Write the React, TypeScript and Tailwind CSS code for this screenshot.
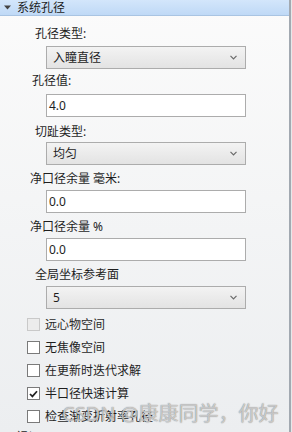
import React from 'react';

const font = "font-['Noto_Sans','Noto_Sans_CJK_SC',sans-serif]";

function Chevron() {
    return (
        <svg width="7" height="5" viewBox="0 0 7 5" className="shrink-0">
            <path d="M0.5 0.8 L3.5 3.8 L6.5 0.8" fill="none" stroke="#6a6a6a" strokeWidth="1.2" />
        </svg>
    );
}

function Select({ value, className = '' }: { value: string; className?: string }) {
    return (
        <div
            className={`ml-[46px] flex h-[23px] w-[200px] items-center justify-between border border-[#acacac] bg-gradient-to-b from-[#f3f3f3] to-[#e3e3e3] pl-[6px] pr-[8px] text-[12px] text-[#1e1e1e] ${className}`}
        >
            <span>{value}</span>
            <Chevron />
        </div>
    );
}

function TextBox({ value, className = '' }: { value: string; className?: string }) {
    return (
        <div
            className={`ml-[46px] flex h-[23px] w-[200px] items-center border border-[#acacac] bg-white pl-[2px] text-[12px] text-[#1e1e1e] ${className}`}
        >
            {value}
        </div>
    );
}

function Label({ text, indent, className = '' }: { text: string; indent: string; className?: string }) {
    return (
        <div className={`flex h-[20px] items-center text-[12px] text-[#1e1e1e] ${indent} ${className}`}>
            {text}
        </div>
    );
}

function Check({ label, checked = false, disabled = false }: { label: string; checked?: boolean; disabled?: boolean }) {
    return (
        <div className="flex h-[23px] items-center gap-[5px] pl-[27px] text-[12px] text-[#1e1e1e]">
            <div
                className={`flex h-[13px] w-[13px] items-center justify-center border ${disabled
                        ? 'border-[#c9c9c9] bg-[#ececec]'
                        : 'border-[#7a7a7a] bg-white'
                    }`}
            >
                {checked && (
                    <svg width="9" height="8" viewBox="0 0 9 8">
                        <path d="M1 4 L3.4 6.4 L8 1.2" fill="none" stroke="#222" strokeWidth="1.7" />
                    </svg>
                )}
            </div>
            <span className={disabled ? 'text-[#2a2a2a]' : ''}>{label}</span>
        </div>
    );
}

export default function App() {
    return (
        <div className={`flex h-[432px] w-[292px] overflow-hidden ${font}`}>
            <div className="relative flex-1 overflow-hidden bg-gradient-to-b from-[#fbfbfb] to-[#eceef0]">
                {/* section header */}
                <div className="flex h-[16px] items-center border-b border-[#a9c4e2] bg-gradient-to-b from-[#d3e6fb] to-[#bfd9f6] pl-[4px] text-[12px] text-[#1e1e1e]">
                    <svg width="7" height="5" viewBox="0 0 7 5" className="mr-[6px]">
                        <path d="M0 0.5 L7 0.5 L3.5 4.5 Z" fill="#444" />
                    </svg>
                    系统孔径
                </div>

                <Label text="孔径类型:" indent="pl-[35px]" className="mt-[8px]" />
                <Select value="入瞳直径" className="mt-[2px]" />

                <Label text="孔径值:" indent="pl-[32px]" className="mt-[2px]" />
                <TextBox value="4.0" className="mt-[3px]" />

                <Label text="切趾类型:" indent="pl-[35px]" className="mt-[5px]" />
                <Select value="均匀" />

                <Label text="净口径余量 毫米:" indent="pl-[30px]" className="mt-[4px]" />
                <TextBox value="0.0" className="mt-[1px]" />

                <Label text="净口径余量 %" indent="pl-[30px]" className="mt-[4px]" />
                <TextBox value="0.0" className="mt-[1px]" />

                <Label text="全局坐标参考面" indent="pl-[35px]" className="mt-[4px]" />
                <Select value="5" className="mt-[1px]" />

                <div className="mt-[4px]">
                    <Check label="远心物空间" disabled />
                    <Check label="无焦像空间" />
                    <Check label="在更新时迭代求解" />
                    <Check label="半口径快速计算" checked />
                    <Check label="检查渐变折射率孔径" />
                </div>
                <div className="flex h-[20px] items-center pl-[16px] text-[12px] text-[#1e1e1e]">视场</div>

                {/* watermark */}
                <div className="pointer-events-none absolute left-[62px] top-[402px] text-[20px] leading-[24px] whitespace-nowrap text-[rgba(235,235,235,0.7)] [text-shadow:0_0_1px_rgba(70,70,70,0.8)]">
                    CSDN @康康同学，你好
                </div>
            </div>
            <div className="w-[2px] shrink-0 bg-[#a2a9b1]" />
            <div className="w-[1px] shrink-0 bg-[#e6e8ea]" />
        </div>
    );
}
